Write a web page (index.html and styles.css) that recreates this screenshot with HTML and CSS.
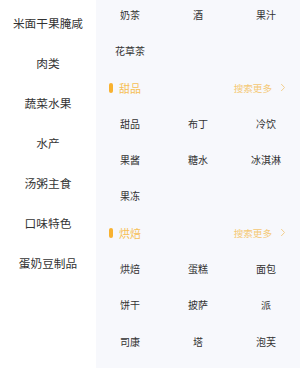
FILE: index.html
```html
<!DOCTYPE html>
<html lang="zh-Hans">
<head>
  <meta charset="UTF-8">
  <title>分类</title>
  <meta name="viewport" content="width=device-width, initial-scale=1.0">
  <link rel="stylesheet" href="styles.css">
</head>
<body>
  <div class="page">
    <ul class="side-menu">
      <li>米面干果腌咸</li>
      <li>肉类</li>
      <li>蔬菜水果</li>
      <li>水产</li>
      <li>汤粥主食</li>
      <li>口味特色</li>
      <li>蛋奶豆制品</li>
    </ul>

    <div class="content">
      <div class="scroll">
        <!-- 饮品 (已滚动到下方) -->
        <div class="grid">
          <span>奶茶</span>
          <span>酒</span>
          <span>果汁</span>
          <span>花草茶</span>
        </div>

        <div class="section-head">
          <i class="bar"></i>
          <span class="section-title">甜品</span>
          <span class="more">搜索更多
            <svg width="6" height="9" viewBox="0 0 6 9"><path d="M1.2 1l3.3 3.5L1.2 8" fill="none" stroke="#f3cf8e" stroke-width="1"/></svg>
          </span>
        </div>
        <div class="grid">
          <span>甜品</span>
          <span>布丁</span>
          <span>冷饮</span>
          <span>果酱</span>
          <span>糖水</span>
          <span>冰淇淋</span>
          <span>果冻</span>
        </div>

        <div class="section-head">
          <i class="bar"></i>
          <span class="section-title">烘焙</span>
          <span class="more">搜索更多
            <svg width="6" height="9" viewBox="0 0 6 9"><path d="M1.2 1l3.3 3.5L1.2 8" fill="none" stroke="#f3cf8e" stroke-width="1"/></svg>
          </span>
        </div>
        <div class="grid">
          <span>烘焙</span>
          <span>蛋糕</span>
          <span>面包</span>
          <span>饼干</span>
          <span>披萨</span>
          <span>派</span>
          <span>司康</span>
          <span>塔</span>
          <span>泡芙</span>
        </div>
      </div>
    </div>
  </div>
</body>
</html>
```

FILE: styles.css
```css
body {
  margin: 0;
  font-family: "Noto Sans CJK SC", "Noto Sans", sans-serif;
  color: #333;
}

.page {
  display: flex;
  width: 300px;
  height: 368px;
  overflow: hidden;
}

.side-menu {
  list-style: none;
  margin: 0;
  padding: 3px 0 0 0;
  width: 96px;
  background: #fff;
  flex-shrink: 0;
}

.side-menu li {
  height: 40px;
  line-height: 40px;
  text-align: center;
  font-size: 11.7px;
  color: #333;
}

.content {
  flex: 1;
  background: #f7f8fc;
  overflow: hidden;
}

/* 模拟已经往下滚动了一点 */
.scroll {
  margin-top: -3px;
}

.grid {
  display: grid;
  grid-template-columns: repeat(3, 1fr);
}

.grid span {
  height: 36.3px;
  line-height: 36.3px;
  text-align: center;
  font-size: 10px;
  color: #333;
}

.section-head {
  display: flex;
  align-items: center;
  height: 36.3px;
  padding: 0 14px 0 13px;
}

.bar {
  display: block;
  width: 4px;
  height: 10px;
  border-radius: 2px;
  background: #f8b230;
  margin-right: 6px;
}

.section-title {
  font-size: 11px;
  color: #f6bf55;
  flex: 1;
}

.more {
  display: flex;
  align-items: center;
  gap: 8px;
  font-size: 9.6px;
  color: #f5c874;
}
```
